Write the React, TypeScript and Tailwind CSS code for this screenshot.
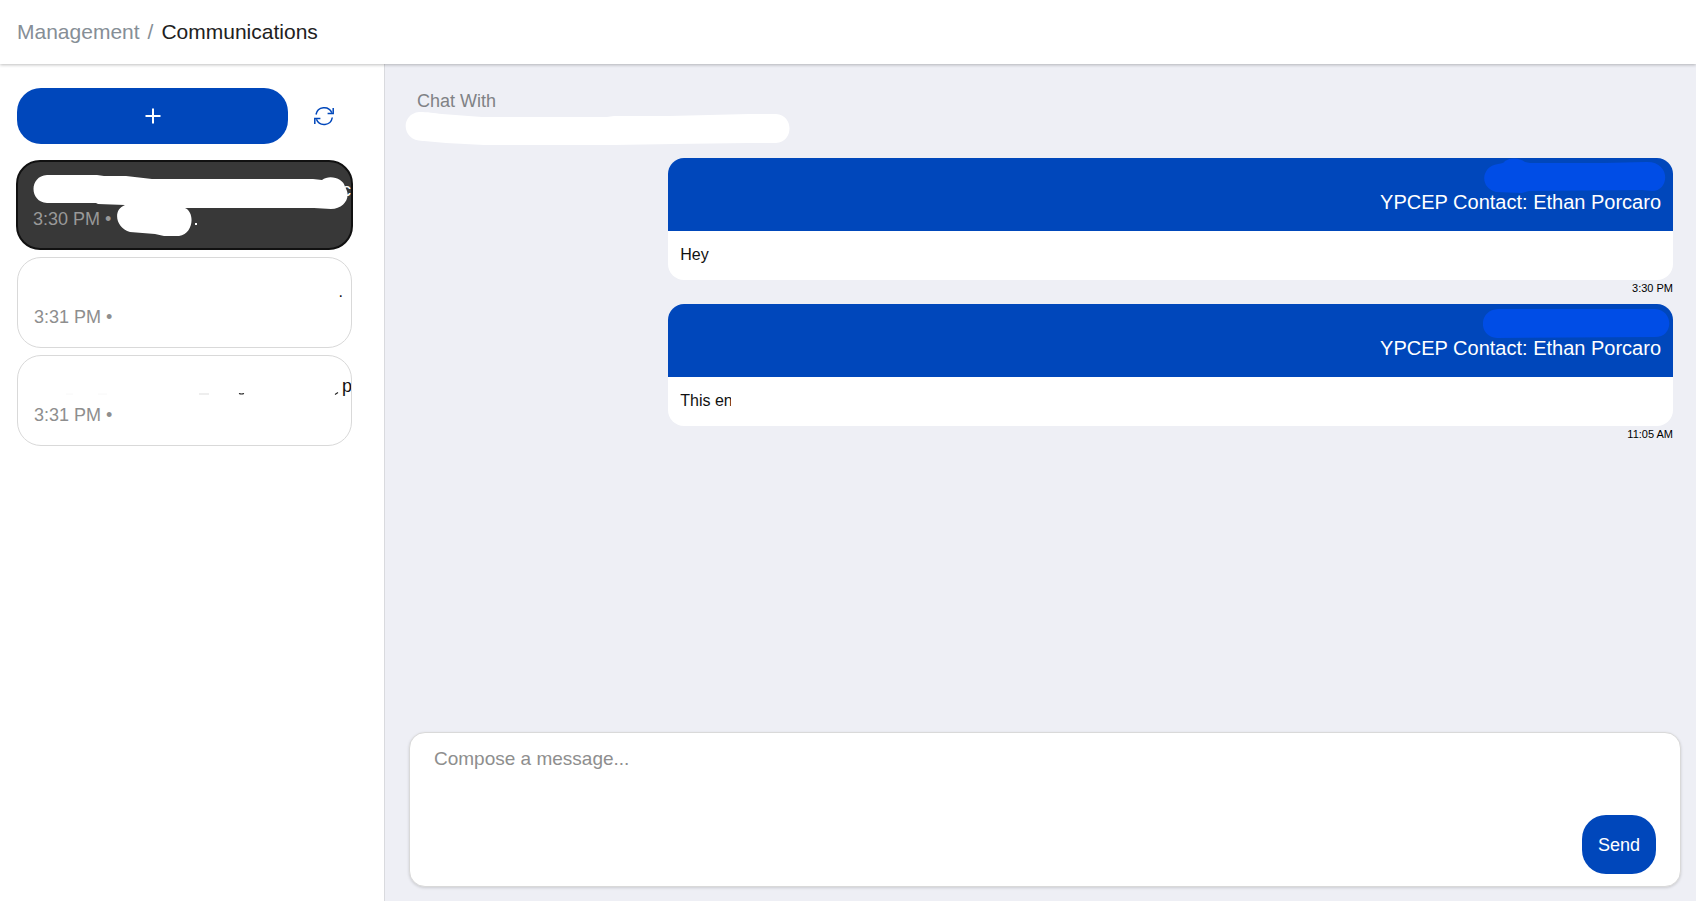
import { ReactNode, useState } from "react";

type Conversation = {
  id: number;
  time: string;
  active?: boolean;
  title: ReactNode;
};

type Message = {
  id: number;
  contact: string;
  body: string;
  time: string;
  mask: string;
};

const messages: Message[] = [
  {
    id: 1,
    contact: "YPCEP Contact: Ethan Porcaro",
    body: "Hey",
    time: "3:30 PM",
    mask: "M15 6 C19 5 21 5 22 3 C28 -1 37 0 42 4 L47 5 L121 5 L163 4 C188 3 187 33 169 33 L159 32 L46 33 L39 35 L13 34 C-4 30 -2 8 15 6Z",
  },
  {
    id: 2,
    contact: "YPCEP Contact: Ethan Porcaro",
    body: "This en",
    time: "11:05 AM",
    mask: "M15 5 L172 5 C191 6 191 33 172 33 L14 34 C-5 33 -5 6 15 5Z",
  },
];

const conversations: Conversation[] = [
  {
    id: 1,
    time: "3:30 PM",
    active: true,
    title: (
      <>
        <span className="text-white">c</span>
        <svg
          className="absolute top-0 left-0 h-[86px] w-[333px]"
          viewBox="0 0 333 86"
          fill="#fff"
          aria-hidden="true"
        >
          <path d="M29 13 L79 13 L86 14 L108 14 L134 17 L295 17 L304 18 C312 12 326 17 327 25 C334 35 326 47 313 47 L296 46 L167 46 C177 50 176 72 161 74 L146 74 L137 72 L112 70 C98 66 94 48 107 43 L80 42 L78 41 L29 41 C11 40 11 14 29 13Z" />
          <path d="M177 61h2v2h-2z" />
        </svg>
      </>
    ),
  },
  { id: 2, time: "3:31 PM", title: <span className="pt-1 pr-2 text-base leading-6">.</span> },
  {
    id: 3,
    time: "3:31 PM",
    title: (
      <>
        <span className="-mr-px">p</span>
        <svg
          className="absolute top-0 left-0 h-[88px] w-[333px]"
          viewBox="0 0 333 88"
          fill="none"
          aria-hidden="true"
        >
          <path d="M181 38h10" stroke="#eee" strokeWidth="2" />
          <path d="M48 38h7M80 38h9" stroke="#f8f8f8" />
          <path d="M221 37.500q2.500 1 5 0" stroke="#222" strokeWidth="1.200" />
          <path d="M317 38.500l3-2" stroke="#222" strokeWidth="1.200" />
        </svg>
      </>
    ),
  },
];

function RefreshIcon() {
  return (
    <svg
      viewBox="0 0 20 20"
      className="h-5 w-5"
      fill="none"
      stroke="currentColor"
      strokeWidth="1.5"
      aria-hidden="true"
    >
      <path d="M2 8.500a8.300 8.300 0 0 1 15.800-1.700" />
      <path d="M19.200 2v5.400h-5.600" />
      <path d="M18.300 11.500a8.300 8.300 0 0 1-15.900 1.700" />
      <path d="M.8 18v-5.500h5.600" />
    </svg>
  );
}

function ConversationCard({ item }: { item: Conversation }) {
  return (
    <button
      type="button"
      aria-label={`Conversation ${item.id}`}
      className={
        item.active
          ? "relative -mx-px flex h-[90px] flex-col overflow-hidden rounded-3xl border-2 border-[#111] bg-[#383838] pt-4 text-left"
          : "relative flex h-[91px] flex-col overflow-hidden rounded-3xl border border-[#d9d9d9] bg-white pt-[18px] text-left"
      }
    >
      <span className="flex h-[29px] w-full justify-end text-lg leading-6 text-[#111]">{item.title}</span>
      <span
        className={
          item.active
            ? "block pl-[15px] text-lg leading-6 text-[#999]"
            : "block pl-4 text-lg leading-6 text-[#8e8e8e]"
        }
      >
        {item.time} •
      </span>
    </button>
  );
}

function MessageBubble({ message }: { message: Message }) {
  return (
    <article className="w-4/5 self-end">
      <div className="overflow-hidden rounded-2xl bg-white">
        <header className="relative bg-[#0047bb] px-3 pt-8 pb-[17px] text-right text-xl leading-6 text-white">
          {message.contact}
          <svg
            className="absolute top-0 right-0 h-9 w-[190px]"
            viewBox="0 0 190 36"
            fill="#004de6"
            aria-hidden="true"
          >
            <path d={message.mask} />
          </svg>
        </header>
        <p className="px-3 pt-3 pb-[13px] text-base leading-6 text-[#111]">
          <span className="block max-w-[51px] overflow-hidden whitespace-nowrap">{message.body}</span>
        </p>
      </div>
      <time className="block text-right text-[11px] leading-4 text-black">{message.time}</time>
    </article>
  );
}

export default function App() {
  const [draft, setDraft] = useState("");

  return (
    <div className="flex min-h-screen flex-col bg-white font-['Liberation_Sans',Arial,sans-serif]">
      <header className="z-10 flex h-16 items-center bg-white px-[17px] shadow-[0_1px_3px_rgba(0,0,0,0.25)]">
        <nav aria-label="Breadcrumb" className="flex gap-2 text-[21px] leading-6">
          <a href="#management" className="text-[#868e96]">
            Management
          </a>
          <span className="text-[#868e96]">/</span>
          <span className="text-[#212121]">Communications</span>
        </nav>
      </header>

      <div className="flex flex-1">
        <aside className="w-[385px] shrink-0 border-r border-[#d9dade] pt-6 pr-8 pl-[17px]">
          <div className="flex items-center">
            <button
              type="button"
              aria-label="New conversation"
              className="flex h-14 w-[271px] items-center justify-center rounded-3xl bg-[#0047bb] text-white"
            >
              <svg viewBox="0 0 16 16" className="h-4 w-4" stroke="currentColor" strokeWidth="2" aria-hidden="true">
                <path d="M8 .5v15M.5 8h15" />
              </svg>
            </button>
            <button type="button" aria-label="Refresh" className="ml-[26px] text-[#0047bb]">
              <RefreshIcon />
            </button>
          </div>
          <div className="mt-4 flex flex-col gap-[7px]">
            {conversations.map((item) => (
              <ConversationCard key={item.id} item={item} />
            ))}
          </div>
        </aside>

        <main className="flex min-w-0 flex-1 flex-col bg-[#eeeff5] pt-6 pr-[15px] pb-[14px] pl-6">
          <section className="flex flex-1 flex-col px-2">
            <div className="relative h-[70px] pt-px">
              <h1 className="text-lg leading-6 text-[#808285]">Chat With</h1>
              <svg
                className="absolute top-6 -left-3 h-9 w-[386px]"
                viewBox="1 -1 386 36"
                fill="#fff"
                overflow="visible"
                aria-hidden="true"
              >
                <path d="M15 -1 C24 -1 30 0 38 1 L78 4 L203 4 L210 3 L265 3 L345 1 L372 1 C390 2 390 29 372 30 L345 30 L270 31 L210 32 L80 32 L42 30 L20 28 C-3 29 -4 1 15 -1Z" />
              </svg>
            </div>
            <div className="flex flex-col gap-2">
              {messages.map((message) => (
                <MessageBubble key={message.id} message={message} />
              ))}
            </div>
          </section>

          <form
            onSubmit={(e) => e.preventDefault()}
            className="flex h-[155px] items-end rounded-2xl border border-[#d9d9d9] bg-white pr-6 pb-3 pl-6 shadow-[0_1px_3px_rgba(0,0,0,0.15)]"
          >
            <textarea
              aria-label="Message"
              placeholder="Compose a message..."
              value={draft}
              onChange={(e) => setDraft(e.target.value)}
              className="h-full flex-1 resize-none pt-[14px] text-[19px] leading-6 text-[#212121] outline-none placeholder:text-[#8e8e8e]"
            />
            <button type="submit" className="h-[59px] rounded-3xl bg-[#0047bb] px-4 text-lg leading-6 text-white">
              Send
            </button>
          </form>
        </main>
      </div>
    </div>
  );
}
